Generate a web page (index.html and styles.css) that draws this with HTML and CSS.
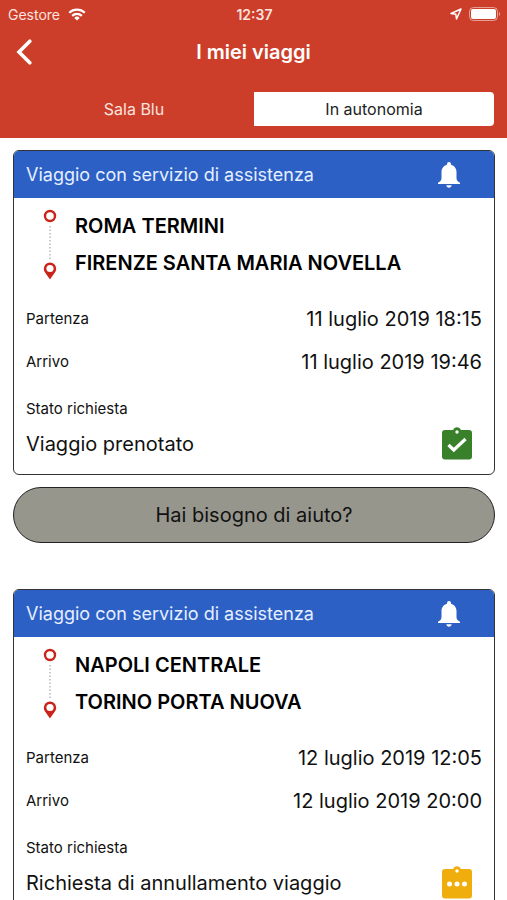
FILE: index.html
```html
<!DOCTYPE html>
<html lang="it">
<head>
  <meta charset="UTF-8">
  <meta name="viewport" content="width=device-width, initial-scale=1">
  <title>I miei viaggi</title>
  <link rel="stylesheet" href="styles.css">
</head>
<body>
  <!-- Shared icons -->
  <svg class="hidden" aria-hidden="true">
    <symbol id="icon-bell" viewBox="0 0 22 26">
      <path d="M11 0a2 2 0 0 1 2 2v.7c3.400.9 5.500 3.700 5.500 7.300v6c0 2 1 3.500 3.500 4.700V22H0v-1.300C2.500 19.500 3.500 18 3.500 16v-6c0-3.600 2.100-6.400 5.500-7.300V2a2 2 0 0 1 2-2zM8.300 23.300h5.400c-.3 1.400-1.300 2.400-2.700 2.400s-2.400-1-2.700-2.400z"/>
    </symbol>
    <symbol id="icon-route" viewBox="0 0 14 72">
      <circle cx="7" cy="8" r="5" fill="none" stroke="#c9241a" stroke-width="2.400"/>
      <path d="M7 18v34" stroke="#b8b8b8" stroke-width="1.500" stroke-dasharray="1.500 2"/>
      <path d="M7 54.500a6.200 6.200 0 0 1 6.200 6.200C13.200 64 10 66.500 7 71.500 4 66.500.8 64 .8 60.700A6.200 6.200 0 0 1 7 54.500z" fill="#c9241a"/>
      <circle cx="7" cy="60.500" r="3.600" fill="#fff"/>
    </symbol>
    <symbol id="icon-clipboard" viewBox="0 0 30 34">
      <path d="M3 3h8.200a4 4 0 0 1 7.600 0H27a3 3 0 0 1 3 3v23.500a3 3 0 0 1-3 3H3a3 3 0 0 1-3-3V6a3 3 0 0 1 3-3z" fill="currentColor"/>
      <circle cx="15" cy="5" r="1.700" fill="#fff"/>
    </symbol>
  </svg>

  <header class="header">
    <div class="status-bar">
      <div class="carrier">
        <span>Gestore</span>
        <svg class="wifi" viewBox="0 0 18 13" fill="none" stroke="#fff" stroke-width="2.200">
          <path d="M1.200 4.800a11.200 11.200 0 0 1 15.600 0M4.200 7.900a6.900 6.900 0 0 1 9.600 0"/>
          <path d="M9 12.600L6.300 9.900a3.800 3.800 0 0 1 5.400 0z" fill="#fff" stroke="none"/>
        </svg>
      </div>
      <span class="clock">12:37</span>
      <div class="indicators">
        <svg class="location" viewBox="0 0 12 12" fill="none" stroke="#fff" stroke-width="1.500" stroke-linejoin="round">
          <path d="M11 1L1 5.500l4.800.7.700 4.800z"/>
        </svg>
        <svg class="battery" viewBox="0 0 32 14">
          <rect x=".5" y=".5" width="28" height="13" rx="4" fill="none" stroke="#fff" stroke-opacity=".5"/>
          <rect x="2" y="2" width="25" height="10" rx="2" fill="#fff"/>
          <path d="M30 5c1.500.5 1.500 3.500 0 4z" fill="#fff" fill-opacity=".5"/>
        </svg>
      </div>
    </div>

    <div class="nav-bar">
      <button class="back-btn" type="button" aria-label="Indietro">
        <svg viewBox="0 0 16 26" fill="none" stroke="#fff" stroke-width="3.600" stroke-linecap="round">
          <path d="M13.800 2.200L3 13l10.800 10.800"/>
        </svg>
      </button>
      <h1 class="title">I miei viaggi</h1>
    </div>

    <div class="segments">
      <button class="segment" type="button">Sala Blu</button>
      <button class="segment active" type="button">In autonomia</button>
    </div>
  </header>

  <main class="trips">
    <section class="trip">
      <article class="card">
        <div class="card-header">
          <h2 class="card-title">Viaggio con servizio di assistenza</h2>
          <button class="bell-btn" type="button" aria-label="Notifiche">
            <svg><use href="#icon-bell"/></svg>
          </button>
        </div>
        <div class="card-body">
          <div class="route">
            <svg class="route-icon"><use href="#icon-route"/></svg>
            <div class="stations">
              <p>ROMA TERMINI</p>
              <p>FIRENZE SANTA MARIA NOVELLA</p>
            </div>
          </div>
          <dl class="times">
            <div class="row">
              <dt>Partenza</dt>
              <dd>11 luglio 2019 18:15</dd>
            </div>
            <div class="row">
              <dt>Arrivo</dt>
              <dd>11 luglio 2019 19:46</dd>
            </div>
          </dl>
          <p class="label">Stato richiesta</p>
          <div class="state">
            <p>Viaggio prenotato</p>
            <svg class="state-icon confirmed" viewBox="0 0 30 34">
              <use href="#icon-clipboard"/>
              <path d="M6.500 18l5.300 5L23.500 12" fill="none" stroke="#fff" stroke-width="3.200"/>
            </svg>
          </div>
        </div>
      </article>
      <button class="help-btn" type="button">Hai bisogno di aiuto?</button>
    </section>

    <section class="trip">
      <article class="card">
        <div class="card-header">
          <h2 class="card-title">Viaggio con servizio di assistenza</h2>
          <button class="bell-btn" type="button" aria-label="Notifiche">
            <svg><use href="#icon-bell"/></svg>
          </button>
        </div>
        <div class="card-body">
          <div class="route">
            <svg class="route-icon"><use href="#icon-route"/></svg>
            <div class="stations">
              <p>NAPOLI CENTRALE</p>
              <p>TORINO PORTA NUOVA</p>
            </div>
          </div>
          <dl class="times">
            <div class="row">
              <dt>Partenza</dt>
              <dd>12 luglio 2019 12:05</dd>
            </div>
            <div class="row">
              <dt>Arrivo</dt>
              <dd>12 luglio 2019 20:00</dd>
            </div>
          </dl>
          <p class="label">Stato richiesta</p>
          <div class="state">
            <p>Richiesta di annullamento viaggio</p>
            <svg class="state-icon pending" viewBox="0 0 30 34">
              <use href="#icon-clipboard"/>
              <g fill="#fff">
                <circle cx="7.500" cy="18" r="2.500"/>
                <circle cx="15" cy="18" r="2.500"/>
                <circle cx="22.500" cy="18" r="2.500"/>
              </g>
            </svg>
          </div>
        </div>
      </article>
    </section>
  </main>
</body>
</html>
```
FILE: styles.css
```css
* {
  box-sizing: border-box;
}
body {
  font-family: Inter, Roboto, sans-serif;
  margin: 0;
  background-color: #fff;
  color: #111;
}
h1, h2, p, dl, dd {
  margin: 0;
}
button {
  font-family: inherit;
  border: none;
  padding: 0;
  background: none;
  cursor: pointer;
}
svg {
  display: block;
}
.hidden {
  display: none;
}

/* Header */
.header {
  background-color: #cc3e2a;
  color: #fff;
  padding-bottom: 12px;
}
.status-bar {
  display: grid;
  grid-template-columns: 1fr auto 1fr;
  align-items: center;
  height: 28px;
  padding: 0 6px 0 8px;
  font-size: 14px;
}
.carrier {
  display: flex;
  align-items: center;
  gap: 8px;
  color: #fbe3df;
}
.wifi {
  width: 18px;
  height: 13px;
}
.clock {
  font-weight: 600;
  color: #fbe3df;
}
.indicators {
  display: flex;
  align-items: center;
  justify-content: flex-end;
  gap: 7px;
}
.location {
  width: 12px;
  height: 12px;
}
.battery {
  width: 32px;
  height: 14px;
}
.nav-bar {
  display: grid;
  grid-template-columns: 1fr auto 1fr;
  align-items: center;
  height: 48px;
  padding: 0 16px;
}
.back-btn {
  justify-self: start;
}
.back-btn svg {
  width: 16px;
  height: 26px;
}
.title {
  font-size: 20px;
  font-weight: 600;
}
.segments {
  display: flex;
  margin: 16px 13px 0 14px;
}
.segment {
  flex: 1;
  height: 34px;
  font-size: 16px;
  color: #fbe3df;
}
.segment.active {
  background-color: #fff;
  color: #222;
  border-radius: 0 4px 4px 0;
}

/* Trips */
.trips {
  display: flex;
  flex-direction: column;
  gap: 46px;
  padding: 12px 12px 24px 13px;
}
.trip {
  display: flex;
  flex-direction: column;
  gap: 12px;
}
.card {
  border: 1px solid #333;
  border-radius: 6px;
  overflow: hidden;
}
.card-header {
  display: flex;
  align-items: center;
  justify-content: space-between;
  height: 47px;
  padding: 0 34px 0 12px;
  background-color: #2c60c5;
}
.card-title {
  font-size: 18px;
  font-weight: 400;
  color: #e6efff;
}
.bell-btn svg {
  width: 22px;
  height: 26px;
  fill: #fff;
}
.card-body {
  padding: 10px 12px 13px;
}
.route {
  display: flex;
  gap: 18px;
  padding-left: 17px;
}
.route-icon {
  width: 14px;
  height: 72px;
}
.stations {
  font-size: 20px;
  font-weight: 600;
  line-height: 37px;
  color: #000;
}
.times {
  margin-top: 15px;
}
.row {
  display: flex;
  align-items: center;
  justify-content: space-between;
  height: 43px;
}
dt, .label {
  font-size: 15px;
}
dd, .state {
  font-size: 20px;
}
.label {
  margin-top: 8px;
  line-height: 36px;
}
.state {
  display: flex;
  align-items: center;
  justify-content: space-between;
  height: 34px;
  padding-right: 10px;
}
.state-icon {
  width: 30px;
  height: 34px;
}
.confirmed {
  color: #38802a;
}
.pending {
  color: #efae0b;
}
.help-btn {
  height: 56px;
  border: 1px solid #222;
  border-radius: 28px;
  background-color: #97968d;
  font-size: 20px;
  color: #111;
}
```
